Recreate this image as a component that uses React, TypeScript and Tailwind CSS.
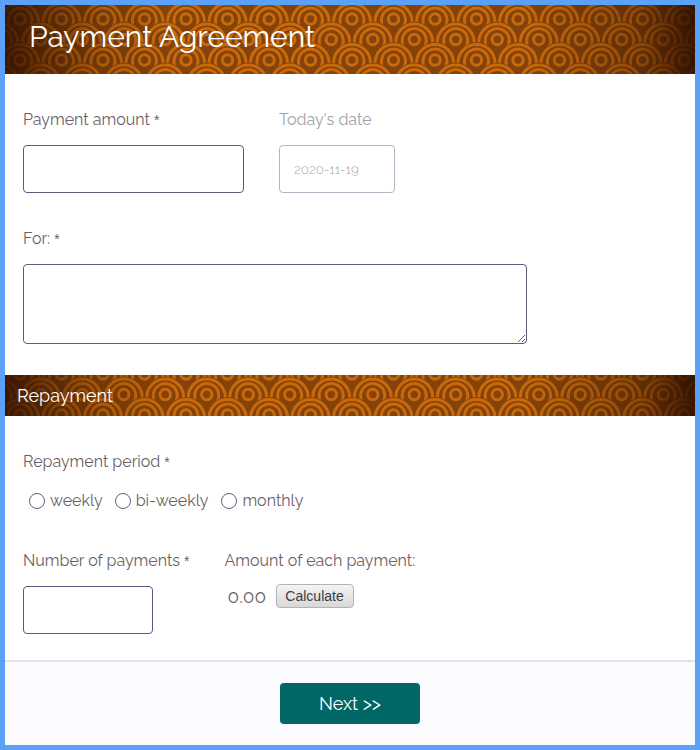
const F = "font-['Raleway','Lato','Open_Sans',sans-serif]";
const BAND = "#c96a0a";
const DARK = "#84430a";

function Star() {
  return <span className="font-['Liberation_Sans',sans-serif] text-[14px]">*</span>;
}

function Scale({ x, y }: { x: number; y: number }) {
  return (
    <g transform={`translate(${x} ${y})`} fill="none" stroke={BAND} strokeWidth="3">
      <circle r="20.9" fill={DARK} stroke="none" />
      <path d="M-18.5 12V0A18.5 18.5 0 1 1 18.5 0V12" />
      <path d="M-12 8V-2.5A12 12 0 1 1 9 6L14 12" />
      <circle cy="-3" r="5.2" />
    </g>
  );
}

function Banner({ h, dy, id }: { h: number; dy: number; id: string }) {
  const rows = [];
  for (let r = 0; r < 6; r++) {
    for (let c = -1; c < 19; c++) {
      rows.push(<Scale key={`${r}-${c}`} x={c * 41.5 + (r % 2 ? 20.75 : 0) + 15} y={r * 20.5 + dy} />);
    }
  }
  return (
    <svg className="absolute inset-0 w-full h-full" viewBox={`0 0 690 ${h}`} preserveAspectRatio="none">
      <defs>
        <linearGradient id={id} x1="0" x2="1" y1="0" y2="0">
          <stop offset="0" stopColor="#240a00" stopOpacity="0.8" />
          <stop offset="0.06" stopColor="#240a00" stopOpacity="0.5" />
          <stop offset="0.14" stopColor="#240a00" stopOpacity="0.18" />
          <stop offset="0.24" stopColor="#240a00" stopOpacity="0" />
          <stop offset="0.75" stopColor="#240a00" stopOpacity="0" />
          <stop offset="0.92" stopColor="#240a00" stopOpacity="0.35" />
          <stop offset="1" stopColor="#240a00" stopOpacity="0.85" />
        </linearGradient>
      </defs>
      <rect width="690" height={h} fill={DARK} />
      {rows}
      <rect width="690" height={h} fill={`url(#${id})`} />
    </svg>
  );
}

function Radio({ label }: { label: string }) {
  return (
    <label className="flex items-center gap-[5px]">
      <span className="w-4 h-4 rounded-full border border-[#5a6078] bg-white" />
      <span>{label}</span>
    </label>
  );
}

export default function App() {
  return (
    <div className={`${F} w-[700px] h-[750px] border-[5px] border-[#5ba1f7] bg-white text-[16px] leading-5 text-[#6b5f66] flex flex-col`}>
      <header className="relative h-[69px] shrink-0 flex items-center pl-6 pb-[6px] overflow-hidden">
        <Banner h={69} dy={17} id="a" />
        <h1 className="relative text-[30px] leading-9 text-white">Payment Agreement</h1>
      </header>

      <main className="flex-1 pl-[18px] flex flex-col">
        <div className="flex pt-[36px] gap-[35px]">
          <div className="flex flex-col gap-[15px]">
            <span>Payment amount <Star /></span>
            <input className="w-[221px] h-12 rounded-sm border border-[#5c5a80] bg-white" />
          </div>
          <div className="flex flex-col gap-[15px] text-[#a3a0a8]">
            <span>Today's date</span>
            <div className="w-[116px] h-12 rounded-sm border border-[#b5b2c5] flex items-center pl-[14px] text-[13.33px] font-light text-[#aaaaaa]">2020-11-19</div>
          </div>
        </div>

        <div className="flex flex-col gap-[15px] pt-[36px]">
          <span>For: <Star /></span>
          <textarea className="block w-[504px] h-20 rounded-sm border border-[#5c5a80] bg-white" />
        </div>

        <div className="relative h-[41px] -ml-[18px] mt-[31px] flex items-center pl-3 overflow-hidden">
          <Banner h={41} dy={2} id="b" />
          <h2 className="relative text-[18px] leading-6 text-white">Repayment</h2>
        </div>

        <div className="pt-[36px]">Repayment period <Star /></div>
        <div className="flex pl-[6px] pt-[19px]">
          <Radio label="weekly" />
          <div className="ml-3"><Radio label="bi-weekly" /></div>
          <div className="ml-[13px]"><Radio label="monthly" /></div>
        </div>

        <div className="flex gap-[35px] pt-[40px]">
          <div className="flex flex-col gap-[15px]">
            <span>Number of payments <Star /></span>
            <input className="w-[130px] h-12 rounded-sm border border-[#5c5a80] bg-white" />
          </div>
          <div className="flex flex-col">
            <span>Amount of each payment:</span>
            <div className="flex items-center pl-[3px] pt-[13px] gap-[9px]">
              <span className="text-[19px] w-[39px]">0.00</span>
              <button className="w-[78px] h-6 rounded-sm border border-[#b4b4b4] bg-gradient-to-b from-[#f4f4f4] to-[#d8d8d8] font-['Liberation_Sans',sans-serif] text-[14px] leading-5 text-[#3c3c46]">Calculate</button>
            </div>
          </div>
        </div>
      </main>

      <footer className="h-[85px] shrink-0 border-t-2 border-[#e3e3e3] bg-[#fafaff] flex justify-center pt-[21px]">
        <button className="w-[140px] h-[41px] rounded-sm bg-[#006666] text-white text-[18px]">Next &gt;&gt;</button>
      </footer>
    </div>
  );
}
